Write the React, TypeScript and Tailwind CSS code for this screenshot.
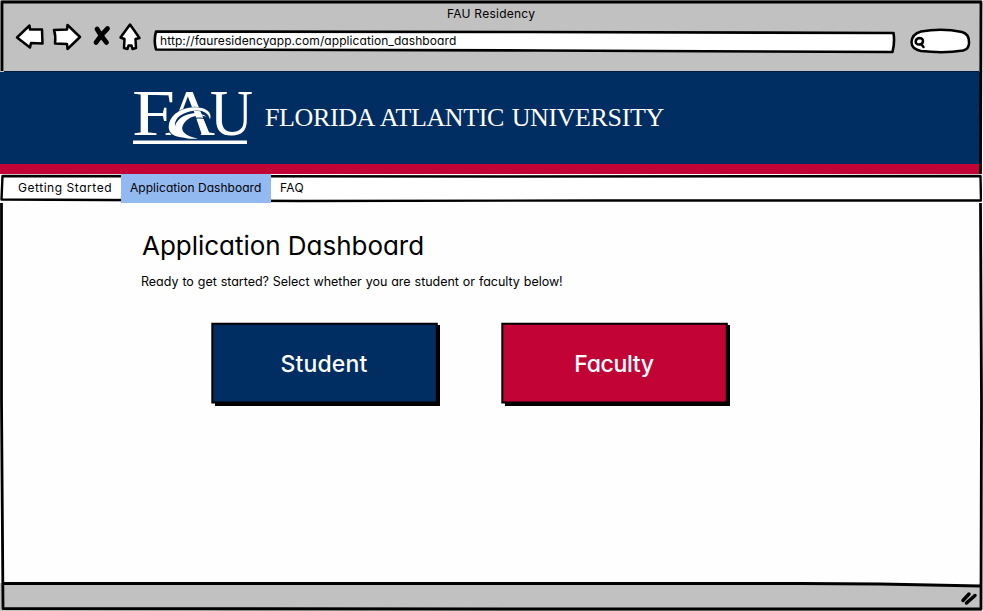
import React from "react";

const stroke = {
  fill: "none",
  stroke: "#000",
  strokeWidth: 3,
  strokeLinecap: "round" as const,
  strokeLinejoin: "round" as const,
};

function NavIcons() {
  return (
    <svg className="ml-[14px] mt-[20px] h-8 w-[130px] shrink-0" viewBox="14 20 130 32">
      <g {...stroke} fill="#fff" strokeWidth={2.5}>
        <path d="M17 37.5 L29.5 25.5 L30 29.5 L42 29.5 L42.5 43.5 L31 43 L30 47.5 Z" />
        <path d="M54 30 L67 29.5 L67.5 25 L80 37 L67.5 49 L67 44 L55 43.5 Q56 36 54 30 Z" />
        <path d="M130 24.5 L139.5 38 L135.5 39 L136 48 L132.5 49 L131.5 45.5 L128.5 45.5 L127.5 49 L124 48 L124.5 39 L120.5 37.5 Z" />
      </g>
      <path d="M97 29 Q101 36 106.5 42.5 M107.5 28.5 Q101 35 96 42.5" fill="none" stroke="#000" strokeWidth="4.8" strokeLinecap="round" />
    </svg>
  );
}

function AddressBar() {
  return (
    <div className="relative ml-[9px] mt-[30px] h-[24px] w-[744px] shrink-0">
      <svg className="absolute inset-0" width="744" height="24" viewBox="153 30 744 24">
        <path d="M156 31.5 L530 32 L893.5 33 Q895 42 892.5 52 L540 50.5 L156 49.5 Q153.5 41 156 31.5 Z" {...stroke} fill="#fff" strokeWidth={2.6} />
      </svg>
      <span className="relative ml-[7px] block text-[12px] leading-[21px] tracking-[0.08px]">
        http://fauresidencyapp.com/application_dashboard
      </span>
    </div>
  );
}

function SearchBox() {
  return (
    <svg className="ml-[12px] mt-[26px] h-[28px] w-[64px] shrink-0" viewBox="909 26 64 28">
      <path d="M921 31.5 Q942 28 962 32 Q969 34 969 42 Q969.5 49 963 50.5 Q944 53.5 921 51 Q911.5 49 911.5 42 Q912 34 921 31.5 Z" {...stroke} fill="#fff" strokeWidth={2.5} />
      <path d="M919.5 38 C914.5 38.5 914.5 44.5 919 44.5 C924 44.5 924.5 38 919.5 38 M921 44 L923.5 47" {...stroke} strokeWidth={2.5} />
    </svg>
  );
}

function Logo() {
  return (
    <svg className="h-[58px] w-[124px] shrink-0 overflow-visible" viewBox="131 88 124 58" fill="#fff">
      <g fontFamily="'Liberation Serif', serif" fontSize="65">
        <text x="132" y="134.5" textLength="43" lengthAdjust="spacingAndGlyphs">F</text>
        <text x="165" y="134.5" textLength="50" lengthAdjust="spacingAndGlyphs">A</text>
        <text x="210" y="134.5" textLength="43" lengthAdjust="spacingAndGlyphs">U</text>
      </g>
      <path d="M180 110 L193 108 L200 112 L203 132 L197 139 L176 137 L168 128 Z" fill="#002d62" />
      <path d="M192 106 L198 106 L210 135 L202 135 Z" />
      <path d="M212 121 C211 103 174 105 170 126 C170 137 184 141 200 139" fill="none" stroke="#002d62" strokeWidth="4" />
      <path d="M210 119.5 C216 103 174 102 169 124 C167 133 174 137 184 137.5 C171 130 173 118 184 113.5 C196 108 208 110 210 119.5 Z" />
      <path d="M207 117 C196 108 175 116 175 128 C176 137 187 140 198 138.5 C185 136 180 131 183 125 C187 117 198 113 207 117 Z" />
      <path d="M206 119 C195 116 189 120 186 126" fill="none" stroke="#002d62" strokeWidth="1" />
      <rect x="133" y="140.5" width="114" height="3.5" />
    </svg>
  );
}

function BigButton({ label, fill, tracking }: { label: string; fill: string; tracking: string }) {
  return (
    <button className={`relative mt-[-1px] flex h-[84px] w-[229px] items-center justify-center pr-[3px] text-[23px] font-medium text-white ${tracking}`}>
      <svg className="absolute inset-0" width="229" height="84" viewBox="0 0 229 84">
        <path d="M4 81.5 L226.5 81.5 L226.5 3" fill="none" stroke="#000" strokeWidth="5" />
        <path d="M1.3 1.8 L225.8 1.8 L225.8 80.5 L1.3 80.5 Z" fill={fill} stroke="#000" strokeWidth="2" />
      </svg>
      <span className="relative">{label}</span>
    </button>
  );
}

export default function App() {
  return (
    <div className="relative flex h-[611px] w-[983px] flex-col overflow-hidden bg-white font-['Inter','Noto_Sans',sans-serif] text-black [font-feature-settings:'cv11']">
      <header className="relative flex h-[72px] shrink-0 items-start bg-[#c1c1c1]">
        <div className="absolute left-[447px] top-[5px] whitespace-nowrap text-[12px] leading-[18px] tracking-[0.25px]">FAU Residency</div>
        <NavIcons />
        <AddressBar />
        <SearchBox />
      </header>
      <div className="mt-[-1px] flex h-[93px] w-[980px] shrink-0 items-start bg-[#002d62] pl-[131px] pt-[17px]">
        <Logo />
        <div className="ml-[10px] mt-[12px] whitespace-nowrap font-['Liberation_Serif',serif] text-[26px] leading-[36px] tracking-[-0.38px] text-white [word-spacing:1.6px]">FLORIDA ATLANTIC UNIVERSITY</div>
      </div>
      <div className="h-[10px] w-[980px] shrink-0 bg-[#c10435]" />
      <nav className="relative flex h-[29px] shrink-0 whitespace-nowrap text-[12px] leading-[27px]">
        <svg className="absolute inset-0" width="983" height="29" viewBox="0 174 983 29">
          <path d="M2.5 176 L500 176.5 L980.5 176 L981 200.5 L600 200.5 L300 201 L1.5 199.5 Z" {...stroke} strokeWidth={2.4} />
        </svg>
        <a className="relative w-[121px] pl-[18px] tracking-[0.54px]">Getting Started</a>
        <a className="relative w-[150px] bg-[#93b9f1] pl-[9px] tracking-[0.04px]">Application Dashboard</a>
        <a className="relative pl-[9px] tracking-[0.3px]">FAQ</a>
      </nav>
      <main className="flex-1 bg-[#fefefe] pl-[141px] pt-[25px]">
        <h1 className="whitespace-nowrap pl-px text-[26px] leading-[36px] tracking-[-0.03px]">Application Dashboard</h1>
        <p className="mt-[8px] whitespace-nowrap text-[12.5px] leading-[20px] tracking-[-0.03px] [word-spacing:0.5px]">Ready to get started? Select whether you are student or faculty below!</p>
        <div className="ml-[70px] mt-[31px] flex gap-[61px]">
          <BigButton label="Student" fill="#002d62" tracking="tracking-[0.15px]" />
          <BigButton label="Faculty" fill="#c10435" tracking="tracking-[-0.35px]" />
        </div>
      </main>
      <footer className="h-[28px] shrink-0 bg-[#c1c1c1]" />
      <svg className="pointer-events-none absolute inset-0" width="983" height="611" viewBox="0 0 983 611">
        <path d="M3 583 L700 583 L860 583.5 L979 586 L979 580 L3 580 Z" fill="#fefefe" />
        <path d="M982 0 H983 V611 H982 Z" fill="#fff" />
        <g {...stroke} strokeWidth={2.8} strokeLinecap="butt">
          <path d="M2 71 V2 H981 L980.5 174" />
          <path d="M1.5 203 L1.5 400 L3 608.5 L500 609 L981 609 L981.5 400 L980.5 203" />
          <path d="M3 583.5 L600 583.5 L800 583.5 L880 584 L980 586" />
        </g>
        <path d="M4 71.5 H979" stroke="#001c3d" strokeWidth="1" />
        <path d="M963 600.5 L969 594 M966.5 603 L975 595.5" {...stroke} strokeWidth={3.5} />
      </svg>
    </div>
  );
}
